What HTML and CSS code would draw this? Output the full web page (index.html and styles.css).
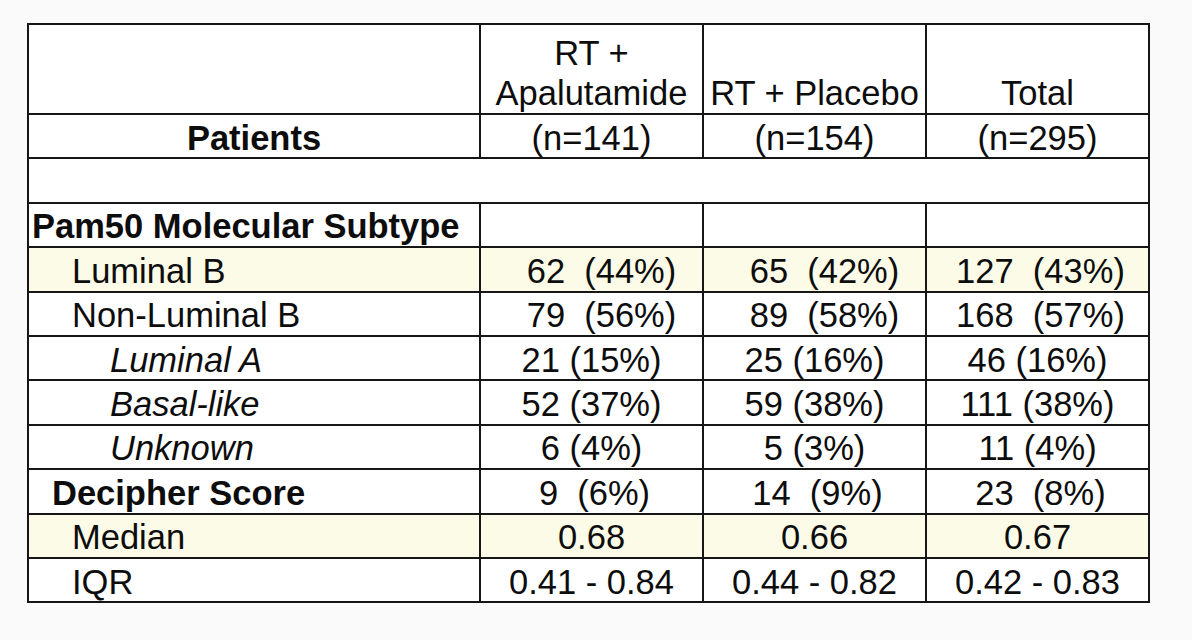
FILE: index.html
```html
<!DOCTYPE html>
<html lang="en">
<head>
<meta charset="utf-8">
<title>Pam50 Molecular Subtype</title>
<link rel="stylesheet" href="styles.css">
</head>
<body>
<table class="tbl">
  <colgroup>
    <col class="c-label">
    <col class="c-num">
    <col class="c-num">
    <col class="c-num">
  </colgroup>
  <tr class="r-head">
    <td></td>
    <td class="hd">RT +<br>Apalutamide</td>
    <td class="hd">RT + Placebo</td>
    <td class="hd">Total</td>
  </tr>
  <tr>
    <td class="lbl-center b">Patients</td>
    <td class="num">(n=141)</td>
    <td class="num">(n=154)</td>
    <td class="num">(n=295)</td>
  </tr>
  <tr>
    <td colspan="4" class="blank"></td>
  </tr>
  <tr>
    <td class="lbl b i0">Pam50 Molecular Subtype</td>
    <td></td>
    <td></td>
    <td></td>
  </tr>
  <tr class="hl">
    <td class="lbl i2">Luminal B</td>
    <td class="num sh">62  (44%)</td>
    <td class="num sh">65  (42%)</td>
    <td class="num sh2">127  (43%)</td>
  </tr>
  <tr>
    <td class="lbl i2">Non-Luminal B</td>
    <td class="num sh">79  (56%)</td>
    <td class="num sh">89  (58%)</td>
    <td class="num sh2">168  (57%)</td>
  </tr>
  <tr>
    <td class="lbl i3 it">Luminal A</td>
    <td class="num">21 (15%)</td>
    <td class="num">25 (16%)</td>
    <td class="num">46 (16%)</td>
  </tr>
  <tr>
    <td class="lbl i3 it">Basal-like</td>
    <td class="num">52 (37%)</td>
    <td class="num">59 (38%)</td>
    <td class="num">111 (38%)</td>
  </tr>
  <tr>
    <td class="lbl i3 it">Unknown</td>
    <td class="num">6 (4%)</td>
    <td class="num">5 (3%)</td>
    <td class="num">11 (4%)</td>
  </tr>
  <tr>
    <td class="lbl b i1">Decipher Score</td>
    <td class="num sh3">9  (6%)</td>
    <td class="num sh3">14  (9%)</td>
    <td class="num sh3">23  (8%)</td>
  </tr>
  <tr class="hl">
    <td class="lbl i2">Median</td>
    <td class="num">0.68</td>
    <td class="num">0.66</td>
    <td class="num">0.67</td>
  </tr>
  <tr>
    <td class="lbl i2">IQR</td>
    <td class="num">0.41 - 0.84</td>
    <td class="num">0.44 - 0.82</td>
    <td class="num">0.42 - 0.83</td>
  </tr>
</table>
</body>
</html>
```

FILE: styles.css
```css
html, body {
  margin: 0;
  padding: 0;
  background: #fafafa;
}

body {
  padding: 23px 0 0 27px;
  font-family: "Liberation Sans", Arial, sans-serif;
  color: #0d0d0d;
}

.tbl {
  border-collapse: collapse;
  table-layout: fixed;
  width: 1123px;
  background: #fff;
  font-size: 34.5px;
}

.c-label { width: 452px; }
.c-num { width: 223px; }

.tbl td {
  border: 2px solid #161616;
  height: 39.4px;
  padding: 3px 0 0 0;
  line-height: 36px;
  white-space: pre;
  vertical-align: middle;
}

.r-head td {
  height: 88px;
  padding: 0;
  vertical-align: bottom;
  line-height: 40px;
}

.hd {
  text-align: center;
}

.num {
  text-align: center;
}

.sh { padding-left: 20px !important; }
.sh2 { padding-left: 6px !important; }
.sh3 { padding-left: 6px !important; }

.lbl-center { text-align: center; }
.lbl { text-align: left; }

.b { font-weight: bold; }
.it { font-style: italic; }

.i0 { padding-left: 3px !important; }
.i1 { padding-left: 23px !important; }
.i2 { padding-left: 43px !important; }
.i3 { padding-left: 81px !important; }

.hl td {
  background: #fbfbe7;
}
```
